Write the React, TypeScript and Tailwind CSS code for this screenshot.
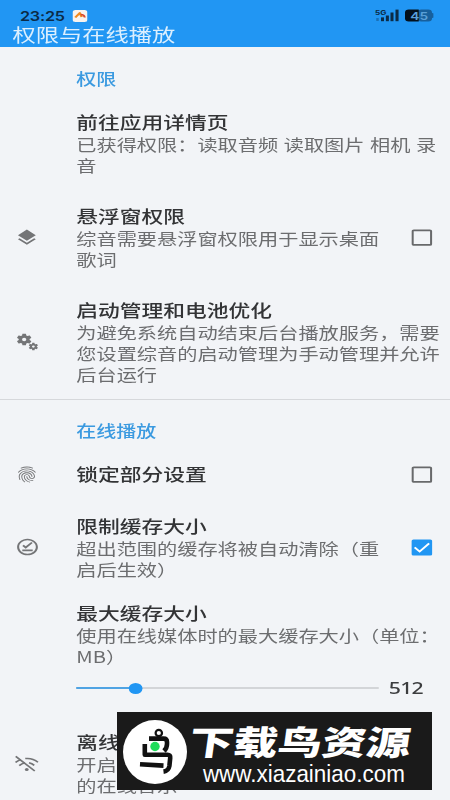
import React from "react";
import {
  MdFingerprint,
  MdLayers,
  MdMiscellaneousServices,
  MdOutlineOfflinePin,
} from "react-icons/md";

interface SettingRowProps {
  title: string;
  summary?: string;
  icon?: React.ReactNode;
  checked?: boolean;
}

const Checkbox: React.FC<{ checked: boolean }> = ({ checked }) => (
  <svg viewBox="0 0 17 17" className="w-[17px] h-[17px] shrink-0" fill="none">
    {checked ? (
      <>
        <rect x="0.2" y="0.4" width="16.6" height="16.2" rx="1.6" fill="#2196f3" />
        <path d="M2.7 8.4l4 4.1 7.6-8.2" stroke="#fff" strokeWidth="1.7" />
      </>
    ) : (
      <rect
        x="1.1"
        y="1.3"
        width="14.8"
        height="14.6"
        rx="1"
        stroke="#68696b"
        strokeWidth="1.7"
      />
    )}
  </svg>
);

const WifiOffIcon: React.FC = () => (
  <svg
    viewBox="0 0 19 19"
    className="w-[19px] h-[19px]"
    fill="none"
    stroke="currentColor"
    strokeWidth="1.5"
  >
    <path d="M.6 2.4L15.8 17" />
    <path d="M8.2 4.6Q13.8 3.6 18.4 8.2" />
    <path d="M.4 8.4Q2.2 6.6 4.6 5.6" />
    <path d="M3.4 11.6Q5.4 9.6 8 8.8" />
    <path d="M11.2 8.8Q13.6 9.6 15.4 11.4" />
    <circle cx="9.4" cy="15.6" r="1.5" fill="currentColor" stroke="none" />
  </svg>
);

const SettingRow: React.FC<SettingRowProps> = ({
  title,
  summary,
  icon,
  checked,
}) => (
  <div className="flex items-center py-3.5">
    <div className="w-[61px] pl-3 shrink-0 text-[#747577]">{icon}</div>
    <div className="flex-1 whitespace-pre">
      <h3 className="text-[17.4px] leading-6 font-medium text-[#333436]">
        {title}
      </h3>
      {summary && (
        <p className="text-[16.17px] leading-[21px] [word-spacing:0.8px] text-[#6c6d6f]">
          {summary}
        </p>
      )}
    </div>
    {checked !== undefined && (
      <div className="w-[31px] shrink-0">
        <Checkbox checked={checked} />
      </div>
    )}
  </div>
);

const SectionTitle: React.FC<{ children: React.ReactNode }> = ({ children }) => (
  <h2 className="pl-[61px] text-[16px] leading-6 font-medium text-[#3b9ae0]">
    {children}
  </h2>
);

const StatusBar: React.FC = () => (
  <div className="flex items-center h-[22px] pt-[9px] pl-4 pr-[13px]">
    <span className="text-[13px] leading-[14px] font-semibold text-[#0b2b47] font-['Inter',sans-serif] tracking-[-0.2px]">
      23:25
    </span>
    <svg viewBox="0 0 12 12" className="ml-[6px] w-3 h-3">
      <rect width="12" height="12" rx="2.5" fill="#f8f3ee" />
      <path d="M2.2 7.5L5.8 3l1.6 4" fill="none" stroke="#f08a20" strokeWidth="2" strokeLinejoin="round" />
      <path d="M6.5 4.5q3 0 3.3 3" fill="none" stroke="#d9482e" strokeWidth="1.6" />
    </svg>
    <svg viewBox="0 0 19 13" className="ml-auto w-[19px] h-[13px]">
      <text x="0" y="5.6" fontSize="6.6" fontWeight="700" fill="#0b2b47" fontFamily="Inter, sans-serif">
        5G
      </text>
      <g fill="#0b2b47">
        <rect x="1" y="9" width="2" height="3" opacity="0.35" />
        <rect x="4.8" y="8.4" width="2.4" height="3.8" />
        <rect x="8.7" y="6.5" width="2.4" height="5.7" />
        <rect x="12.4" y="3.5" width="2.4" height="8.7" />
        <rect x="16.4" y="0.6" width="2.6" height="11.6" />
      </g>
    </svg>
    <svg viewBox="0 0 23 13" className="ml-[5px] w-[23px] h-[13px]">
      <rect x="10" y="0.5" width="11.6" height="12" rx="3" fill="#175f9c" />
      <path d="M3 .5h8v12H3a3 3 0 0 1-3-3v-6a3 3 0 0 1 3-3z" fill="#03101c" />
      <rect x="21.4" y="4" width="1.4" height="5" rx="0.7" fill="#175f9c" />
      <text x="4.2" y="10.5" fontSize="11" fontWeight="600" fill="#5a9fd8" fontFamily="Inter, sans-serif">
        45
      </text>
    </svg>
  </div>
);

const CacheSlider: React.FC<{ value: number; percent: number }> = ({
  value,
  percent,
}) => (
  <div className="flex items-center h-[22px] pl-[61px]">
    <div className="relative w-[242px] h-[2px] bg-[#d3d5d8]">
      <div className="h-full bg-[#4fa3e3]" style={{ width: `${percent}%` }} />
      <div
        className="absolute -top-[4.5px] -ml-[5.5px] w-[11px] h-[11px] rounded-full bg-[#2196f3]"
        style={{ left: `${percent}%` }}
      />
    </div>
    <span className="pl-[8px] text-[17px] leading-5 font-medium tracking-[-0.6px] text-[#3c3d3f] font-['Noto_Sans',sans-serif]">
      {value}
    </span>
  </div>
);

const BirdLogo: React.FC = () => (
  <svg viewBox="0 0 64 64" className="w-16 h-16 shrink-0">
    <circle cx="32" cy="32" r="32" fill="#fff" />
    <g fill="none" stroke="#111" strokeWidth="4.6" strokeLinejoin="round">
      <path d="M26 18.6H40.5Q44 18.6 44 22V24Q44 28 41 31" />
      <path d="M21.8 24V34.8H44.5Q47.6 34.8 47.2 38L46.4 46Q45.6 51 40.5 51.6" />
      <path d="M17 44.3L40.5 45.6" />
      <circle cx="35.8" cy="13" r="3.2" strokeWidth="2.2" />
    </g>
    <circle cx="32" cy="26.5" r="4.7" fill="#1fdc5a" />
  </svg>
);

const Watermark: React.FC = () => (
  <div className="absolute left-[117px] top-[712px] w-[315px] h-[78px] bg-[#1a1a1a] flex items-center pl-[6px] pt-[2px] text-white">
    <BirdLogo />
    <div className="pl-[3px] whitespace-nowrap">
      <div className="w-[180px] pt-[5px] text-[35.4px] leading-[38px] font-black origin-left scale-x-125 scale-y-95 -skew-x-6">
        下载鸟资源
      </div>
      <div className="w-[220px] pl-[14px] text-[24.4px] leading-[28px] origin-left scale-x-[0.92] font-['Liberation_Sans',sans-serif]">
        www.xiazainiao.com
      </div>
    </div>
  </div>
);

const App: React.FC = () => {
  return (
    <div className="relative w-[450px] h-[800px] overflow-hidden bg-[#f2f4f7] font-['Noto_Sans_CJK_SC',sans-serif]">
      <div className="w-[360px] origin-left scale-x-125">
        <header className="h-[47px] bg-[#2196f3]">
          <StatusBar />
          <h1 className="pl-[10px] text-[18.6px] leading-6 text-[#dceffe]">
            权限与在线播放
          </h1>
        </header>

        <section className="h-[353px] pt-[19px] border-b border-[#d6d8db]">
          <SectionTitle>权限</SectionTitle>
          <div className="pt-[6px]">
            <SettingRow
              title="前往应用详情页"
              summary={"已获得权限：读取音频 读取图片 相机 录\n音"}
            />
            <SettingRow
              title="悬浮窗权限"
              summary={"综音需要悬浮窗权限用于显示桌面\n歌词"}
              icon={<MdLayers size={19} />}
              checked={false}
            />
            <SettingRow
              title="启动管理和电池优化"
              summary={
                "为避免系统自动结束后台播放服务，需要\n您设置综音的启动管理为手动管理并允许\n后台运行"
              }
              icon={<MdMiscellaneousServices size={20} />}
            />
          </div>
        </section>

        <section className="pt-[18px]">
          <SectionTitle>在线播放</SectionTitle>
          <div className="pt-[6px]">
            <SettingRow
              title="锁定部分设置"
              icon={<MdFingerprint size={19} />}
              checked={false}
            />
            <SettingRow
              title="限制缓存大小"
              summary={"超出范围的缓存将被自动清除（重\n启后生效）"}
              icon={<MdOutlineOfflinePin size={20} />}
              checked={true}
            />
            <div className="-mt-[7px] h-[129px]">
              <SettingRow
                title="最大缓存大小"
                summary={"使用在线媒体时的最大缓存大小（单位：\nMB）"}
              />
              <div className="-mt-[4px]">
                <CacheSlider value={512} percent={19.8} />
              </div>
            </div>
            <SettingRow
              title="离线模式"
              summary={"开启后将仅播放已缓存\n的在线音乐"}
              icon={<WifiOffIcon />}
            />
          </div>
        </section>
      </div>

      <Watermark />
    </div>
  );
};

export default App;
